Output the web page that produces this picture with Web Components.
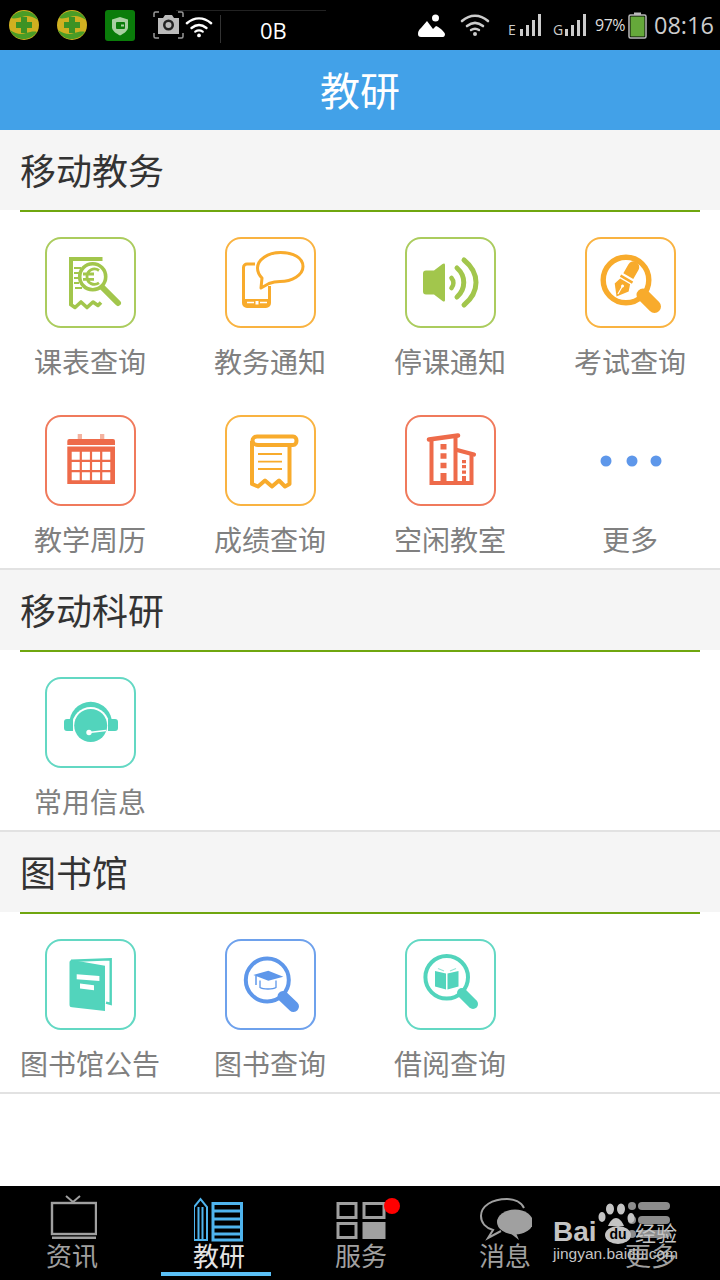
<!DOCTYPE html>
<html lang="zh">
<head>
<meta charset="utf-8">
<title>教研</title>
<style>
  html, body { margin: 0; padding: 0; background: #fff; }
  body { font-family: "Noto Sans CJK SC", "Noto Sans", sans-serif; }
</style>
</head>
<body>
<app-shell>
  <status-bar slot="status"></status-bar>
  <title-bar slot="title">教研</title-bar>
  <menu-section title="移动教务">
    <menu-tile label="课表查询" icon="receipt" color="#a2c64c"></menu-tile>
    <menu-tile label="教务通知" icon="phone" color="#f8ab2c"></menu-tile>
    <menu-tile label="停课通知" icon="speaker" color="#a2c64c"></menu-tile>
    <menu-tile label="考试查询" icon="pen" color="#f8ab2c"></menu-tile>
    <menu-tile label="教学周历" icon="calendar" color="#ee6b4a"></menu-tile>
    <menu-tile label="成绩查询" icon="scroll" color="#f8ab2c"></menu-tile>
    <menu-tile label="空闲教室" icon="building" color="#ee6b4a"></menu-tile>
    <menu-tile label="更多" icon="more" color="#5e97ea" plain></menu-tile>
  </menu-section>
  <menu-section title="移动科研">
    <menu-tile label="常用信息" icon="headset" color="#52d4bc"></menu-tile>
  </menu-section>
  <menu-section title="图书馆">
    <menu-tile label="图书馆公告" icon="book" color="#52d4bc"></menu-tile>
    <menu-tile label="图书查询" icon="cap" color="#5e97ea"></menu-tile>
    <menu-tile label="借阅查询" icon="booksearch" color="#52d4bc"></menu-tile>
  </menu-section>
  <tab-bar slot="tabs"></tab-bar>
</app-shell>

<script>
// icons are drawn on the 90x90 box of a tile, currentColor is the tile colour
const ICONS = {
  receipt: `
    <path d="M24.500 22H57.500M26 20V68" fill="none" stroke="currentColor" stroke-width="4"/>
    <path d="M25 67l5 3.500 6-5.500 6 5.500 6-5.500 5 3.500 3-3" fill="none" stroke="currentColor" stroke-width="3.600" stroke-linejoin="round"/>
    <path d="M29 31h7M29 36h5M29 41h5M29 46h5M30 51h7" fill="none" stroke="currentColor" stroke-width="2"/>
    <circle cx="47.700" cy="39.700" r="13" fill="#fff" stroke="currentColor" stroke-width="3.600"/>
    <path d="M54 33.500c-5-3.500-12-.5-12 6.200s7 9.700 12 6.200M38 37h11M38 42.400h11" fill="none" stroke="currentColor" stroke-width="2.800"/>
    <path d="M58 51l15 15" stroke="currentColor" stroke-width="6" stroke-linecap="round"/>`,
  phone: `
    <path d="M30 27H22a3.500 3.500 0 0 0-3.500 3.500V66a3.500 3.500 0 0 0 3.500 3.500H41a3.500 3.500 0 0 0 3.500-3.500V49" fill="none" stroke="currentColor" stroke-width="3"/>
    <path d="M19 62h25v8H19z" fill="currentColor"/>
    <path d="M22 65.500h7M35 65.500h7" stroke="#fff" stroke-width="1.400"/>
    <rect x="30.500" y="64" width="3" height="3.500" fill="#fff"/>
    <path d="M37 41c-3-3-4.500-6-4.500-10 0-8 10-15.500 23-15.500S78 21 78 29.500 67 44.500 55 44.500c-4 0-7 .5-11 2l-8 4.500z" fill="#fff" stroke="currentColor" stroke-width="3" stroke-linejoin="round"/>`,
  speaker: `
    <path d="M21 33.500H29l8.500-6.500c1.500-1 2.500-.5 2.500 1v35c0 1.500-1 2-2.500 1L29 57.500h-8a3 3 0 0 1-3-3v-18a3 3 0 0 1 3-3z" fill="currentColor"/>
    <g fill="none" stroke="currentColor" stroke-width="5" stroke-linecap="round">
      <path d="M46.500 41c2.500 3 2.500 7 0 10" stroke-width="4.600"/>
      <path d="M52 31c9 8 9 21 0 29"/>
      <path d="M59 23c16 13 16 32 0 45"/>
    </g>`,
  pen: `
    <circle cx="41" cy="43" r="22.800" fill="none" stroke="currentColor" stroke-width="5.400"/>
    <path d="M58 58l11.500 11.500" stroke="currentColor" stroke-width="13" stroke-linecap="round"/>
    <g transform="translate(41 43) rotate(30) scale(1.150)">
      <path d="M-5-4v-9a5 5 0 0 1 10 0v9z" fill="currentColor"/>
      <rect x="-6" y="-2" width="12" height="2.200" fill="currentColor"/>
      <path d="M-5 1.500h10l2 6-7 9-7-9z" fill="currentColor"/>
      <path d="M0 6v8" stroke="#fff" stroke-width="1"/>
      <circle cx="0" cy="6" r="1.300" fill="#fff"/>
    </g>`,
  calendar: `
    <path d="M32.700 19H37v9h-4.300zM55 19h4.300v9H55z" fill="#f4b3a0"/>
    <path d="M22.300 26a2 2 0 0 1 2-2H68a2 2 0 0 1 2 2v4H22.300z" fill="currentColor"/>
    <path fill-rule="evenodd" fill="currentColor" d="M22.300 31.500H70V69H22.300z
      M26.700 36.700v8h8v-8zM36.900 36.700v8h8v-8zM47.100 36.700v8h8v-8zM57.300 36.700v8h8v-8z
      M26.700 47v8h8v-8zM36.900 47v8h8v-8zM47.100 47v8h8v-8zM57.300 47v8h8v-8z
      M26.700 57.300v8h8v-8zM36.900 57.300v8h8v-8zM47.100 57.300v8h8v-8zM57.300 57.300v8h8v-8z"/>`,
  scroll: `
    <path d="M27 26v43l6 2.500 7-6 7 6 7-6 6 6 4.500-2.500V31" fill="none" stroke="currentColor" stroke-width="4" stroke-linejoin="round"/>
    <path d="M33 30c-3.500 0-5.500-2.200-5.500-4.500s2-4 4.500-4h36c2.500 0 3.500 2.200 3.500 4.200S70.500 30 68 30H33" fill="none" stroke="currentColor" stroke-width="4"/>
    <path d="M33 39h24M33 46.700h24M33 54h24" stroke="currentColor" stroke-width="1.800"/>`,
  building: `
    <path d="M24 24.500l29-4" stroke="currentColor" stroke-width="4.600" stroke-linecap="round"/>
    <path d="M52 35l17 4.500" stroke="currentColor" stroke-width="4.200" stroke-linecap="round"/>
    <path d="M26.500 25v43h40V40M50.500 22v46" fill="none" stroke="currentColor" stroke-width="4"/>
    <path d="M25 66h43v3.500H25z" fill="currentColor"/>
    <path d="M35.500 29h6v5.500h-6zM35.500 38.300h6v5.500h-6zM35.500 47.700h6v5.500h-6zM35.500 58h6v10h-6zM57 45h4v3.200h-4zM57 50h4v3.200h-4zM57 55.500h4v3.200h-4zM57 61h4v7h-4z" fill="currentColor"/>`,
  more: `
    <circle cx="21" cy="46" r="5.500" fill="currentColor"/>
    <circle cx="47" cy="46" r="5.500" fill="currentColor"/>
    <circle cx="71" cy="46" r="5.500" fill="currentColor"/>`,
  headset: `
    <path d="M24.200 47a21.500 22.300 0 0 1 43 0z" fill="currentColor"/>
    <circle cx="45.700" cy="48.700" r="18.700" fill="#fff"/>
    <path d="M28 42v12h-6a3 3 0 0 1-3-3v-6a3 3 0 0 1 3-3zM64 42v12h6a3 3 0 0 0 3-3v-6a3 3 0 0 0-3-3z" fill="currentColor"/>
    <path d="M24 42h4v12h-4zM63 42h4v12h-4z" fill="currentColor"/>
    <circle cx="45.700" cy="48.500" r="16.500" fill="currentColor"/>
    <path d="M44 55.500l17-2" stroke="#fff" stroke-width="1.500"/>
    <circle cx="44" cy="55.500" r="2.700" fill="#fff"/>`,
  book: `
    <path d="M26 21.700l39.700-1.400V65L61 63.700" fill="none" stroke="currentColor" stroke-width="2.400"/>
    <path d="M27 21l33 5.800V72l-33-3.700a2.500 2.500 0 0 1-2.500-2.500V23.500A2.500 2.500 0 0 1 27 21z" fill="currentColor"/>
    <path d="M31.700 35.300l22.700 1.700v5l-22.700-1.700zM35 44.500l14 1.700v5l-14-1.700z" fill="#fff"/>`,
  cap: `
    <circle cx="42.300" cy="41" r="21.500" fill="none" stroke="currentColor" stroke-width="4"/>
    <path d="M58 57.500l10.500 10" stroke="currentColor" stroke-width="11" stroke-linecap="round"/>
    <path d="M28.300 36l15-4.300 15 6-15 4z" fill="currentColor"/>
    <path d="M35 41.500v7c3 2 13 2 16 0v-7" fill="none" stroke="currentColor" stroke-width="1.300"/>
    <path d="M31 37v9" stroke="currentColor" stroke-width="1.500"/>`,
  booksearch: `
    <circle cx="41.700" cy="38.300" r="21.300" fill="none" stroke="currentColor" stroke-width="4"/>
    <path d="M57 54l11 11" stroke="currentColor" stroke-width="10" stroke-linecap="round"/>
    <path d="M30 32l11 2.500v16L30 47.500zM53.500 32l-11 2.500v16l11-3z" fill="currentColor"/>
    <path d="M33 29.500l6 2.500M51 29.500l-6 2.500" stroke="currentColor" stroke-width="1.200" opacity=".6"/>`
};

class AppShell extends HTMLElement {
  constructor() {
    super();
    this.attachShadow({ mode: 'open' });
    this.shadowRoot.innerHTML = `
      <style>
        :host {
          display: flex;
          flex-direction: column;
          width: 720px;
          height: 1280px;
          overflow: hidden;
          background: #fff;
        }
        .content { flex: 1; min-height: 0; }
      </style>
      <slot name="status"></slot>
      <slot name="title"></slot>
      <div class="content"><slot></slot></div>
      <slot name="tabs"></slot>
    `;
  }
}

class StatusBar extends HTMLElement {
  constructor() {
    super();
    this.attachShadow({ mode: 'open' });
    const wifi = (w, h) => `
      <svg width="${w}" height="${h}" viewBox="0 0 30 24" fill="none" stroke="currentColor" stroke-linecap="round">
        <path d="M2 8c8-7 18-7 26 0" stroke-width="2.600"/>
        <path d="M7 13c5-4 11-4 16 0" stroke-width="2.600"/>
        <path d="M11 17c3-2 5-2 8 0" stroke-width="2.400"/>
        <circle cx="15" cy="21" r="2" fill="currentColor" stroke="none"/>
      </svg>`;
    const bars = `
      <svg width="21" height="23" viewBox="0 0 21 23" fill="#ccc">
        <rect x="0" y="15" width="3" height="7"/><rect x="6" y="11" width="3" height="11"/>
        <rect x="12" y="6" width="3" height="16"/><rect x="18" y="0" width="3" height="22"/>
      </svg>`;
    const cross = `
      <svg width="32" height="32" viewBox="0 0 32 32">
        <circle cx="16" cy="16" r="15" fill="#d0b020"/>
        <path d="M3 9c5-7 14-9 21-5 3 2 5 4 6 7-6-4-11-5-16-3-4 1-8 2-11 1zM29 23c-5 7-14 9-21 5-3-2-5-4-6-7 6 4 11 5 16 3 4-1 8-2 11-1z" fill="#4a9c26"/>
        <path d="M13 8h6v5h5v6h-5v5h-6v-5H8v-6h5z" fill="#3d9224"/>
      </svg>`;
    this.shadowRoot.innerHTML = `
      <style>
        :host {
          display: flex;
          align-items: center;
          height: 50px;
          background: #000;
          color: #fff;
          font-family: "Open Sans", "Noto Sans", sans-serif;
          flex: none;
          position: relative;
        }
        svg { display: block; flex: none; }
        .speed { font-size: 22px; margin-left: 39px; margin-top: 9px; width: 27px; }
        .sep { width: 1px; height: 28px; background: #333; margin-left: 7px; margin-top: 8px; flex: none; }
        .net { font-size: 14px; color: #ccc; align-self: flex-end; margin-bottom: 14px; width: 12px; text-align: left; line-height: 12px; }
        .pct { font-size: 16px; color: #ddd; margin-left: 9px; letter-spacing: -0.5px; width: 33px; }
        .clock { font-size: 23.500px; color: #ccc; margin-left: 7px; }
        .top { position: absolute; left: 176px; top: 10px; width: 150px; height: 1px; background: #222; }
      </style>
      <span class="top"></span>
      <span style="margin-left:8px">${cross}</span>
      <span style="margin-left:16px">${cross}</span>
      <svg style="margin-left:17px" width="30" height="31" viewBox="0 0 30 31">
        <rect width="30" height="31" rx="3" fill="#0a7c0a"/>
        <path d="M15 7l8 2.500v8c0 3-4 6-8 8-4-2-8-5-8-8v-8z" fill="#a9cfa2"/>
        <rect x="11" y="12" width="9" height="7" rx="1" fill="#0a7c0a"/><rect x="16" y="14.500" width="3" height="2" fill="#a9cfa2"/>
      </svg>
      <svg style="margin-left:18px" width="31" height="28" viewBox="0 0 31 28">
        <path d="M1 6V2.500A1.500 1.500 0 0 1 2.500 1H6M25 1h3.500A1.500 1.500 0 0 1 30 2.500V6M1 22v3.500A1.500 1.500 0 0 0 2.500 27H6M25 27h3.500a1.500 1.500 0 0 0 1.500-1.500V22" fill="none" stroke="#999" stroke-width="1.500"/>
        <path d="M5 7h5l2-3h7l2 3h5v16H5z" fill="#bbb"/>
        <circle cx="15.500" cy="14" r="5.500" fill="#222"/><circle cx="15.500" cy="14" r="3" fill="#bbb"/>
      </svg>
      <span style="margin-left:1px;margin-top:3px">${wifi(28, 24)}</span>
      <span class="sep"></span>
      <span class="speed">0B</span>
      <svg style="margin-left:131px" width="27" height="23" viewBox="0 0 27 23" fill="#fff">
        <circle cx="17.500" cy="4" r="3.500"/>
        <path d="M0 20c0-3 1-4 3-6l6-7 6 8 3-3c3 1 8 5 9 8 0 2-1 3-2 3H3c-2 0-3-1-3-3z"/>
      </svg>
      <span style="margin-left:15px;color:#ccc">${wifi(30, 24)}</span>
      <span class="net" style="margin-left:18px">E</span>${bars}
      <span class="net" style="margin-left:12px">G</span>${bars}
      <span class="pct">97%</span>
      <svg style="margin-left:0" width="19" height="27" viewBox="0 0 19 27">
        <rect x="6" y="0.500" width="7" height="3" fill="#bbb"/>
        <rect x="1" y="3" width="17" height="23" rx="1.500" fill="#000" stroke="#bbb" stroke-width="1.500"/>
        <rect x="2.500" y="4.500" width="14" height="20" fill="#65a83a"/>
      </svg>
      <span class="clock">08:16</span>
    `;
  }
}

class TitleBar extends HTMLElement {
  constructor() {
    super();
    this.attachShadow({ mode: 'open' });
    this.shadowRoot.innerHTML = `
      <style>
        :host {
          display: flex;
          flex: none;
          align-items: center;
          justify-content: center;
          height: 77px;
          padding-bottom: 3px;
          background: #42a1e8;
          color: #fff;
          font-size: 40px;
        }
      </style>
      <slot></slot>
    `;
  }
}

class MenuSection extends HTMLElement {
  constructor() {
    super();
    this.attachShadow({ mode: 'open' });
    this.shadowRoot.innerHTML = `
      <style>
        :host {
          display: block;
          border-bottom: 2px solid #e2e2e2;
        }
        .head {
          height: 78px;
          padding: 0 0 2px 20px;
          background: #f5f5f5;
          display: flex;
          align-items: center;
          font-size: 36px;
          color: #333;
        }
        .rule { height: 2px; margin: 0 20px; background: #6fa60f; }
        .tiles {
          display: grid;
          grid-template-columns: repeat(4, 180px);
          grid-auto-rows: 178px;
        }
      </style>
      <div class="head"></div>
      <div class="rule"></div>
      <div class="tiles"><slot></slot></div>
    `;
  }

  connectedCallback() {
    this.shadowRoot.querySelector('.head').textContent = this.getAttribute('title');
  }
}

class MenuTile extends HTMLElement {
  constructor() {
    super();
    this.attachShadow({ mode: 'open' });
  }

  connectedCallback() {
    const frame = this.hasAttribute('plain') ? '' :
      '<rect x="1" y="1" width="89" height="89" rx="15" fill="none" stroke="currentColor" stroke-width="2" opacity=".9"/>';
    this.shadowRoot.innerHTML = `
      <style>
        :host {
          display: flex;
          flex-direction: column;
          align-items: center;
          padding-top: 25px;
          color: ${this.getAttribute('color')};
        }
        svg { display: block; flex: none; overflow: visible; }
        .label {
          margin-top: 14px;
          height: 40px;
          line-height: 40px;
          font-size: 28px;
          color: #808080;
          white-space: nowrap;
        }
      </style>
      <svg width="90" height="90" viewBox="0 0 90 90">${frame}${ICONS[this.getAttribute('icon')]}</svg>
      <div class="label">${this.getAttribute('label')}</div>
    `;
  }
}

class TabBar extends HTMLElement {
  constructor() {
    super();
    this.attachShadow({ mode: 'open' });
    this.shadowRoot.innerHTML = `
      <style>
        :host {
          display: grid;
          flex: none;
          grid-template-columns: 144px 150px 134px 154px 138px;
          height: 94px;
          background: #000;
          position: relative;
          color: #a0a0a0;
        }
        .item {
          display: flex;
          flex-direction: column;
          align-items: center;
          position: relative;
          font-size: 26px;
        }
        .icon { height: 56px; display: block; flex: none; }
        .item span { line-height: 28px; margin-top: -1px; }
        .active { color: #e4e4e4; }
        .active::after {
          content: "";
          position: absolute;
          left: 17px;
          bottom: 4px;
          width: 110px;
          height: 4px;
          background: #5ac0f6;
        }
        .dot {
          position: absolute;
          left: 90px;
          top: 12px;
          width: 16px;
          height: 16px;
          border-radius: 50%;
          background: #f00;
        }
        .mark {
          position: absolute;
          left: 553px;
          top: 14px;
          width: 130px;
          height: 78px;
          color: #c4c4c4;
          font-family: "Liberation Sans", sans-serif;
        }
        .bai { position: absolute; left: 0; top: 14px; font-size: 28px; font-weight: bold; line-height: 36px; }
        .du {
          position: absolute; left: 52px; top: 26px; width: 26px; height: 18px; border-radius: 50%;
          background: #c4c4c4; color: #000; font-size: 14px; font-weight: bold; line-height: 17px; text-align: center;
        }
        .jy { position: absolute; left: 82px; top: 18px; font: 21px/28px "Noto Sans CJK SC", sans-serif; }
        .url { position: absolute; left: 0; top: 43px; font-size: 15.500px; line-height: 22px; white-space: nowrap; }
        .paw { position: absolute; left: 43px; top: 3px; }
      </style>
      <div class="item">
        <svg class="icon" width="50" height="56" viewBox="0 0 50 56">
          <path d="M19 10l7 6 7-6" fill="none" stroke="#a0a0a0" stroke-width="2"/>
          <rect x="5" y="17" width="44" height="31" fill="none" stroke="#a0a0a0" stroke-width="2.400"/>
          <path d="M5 50.500h44v2.500H5z" fill="#a0a0a0"/>
        </svg>
        <span>资讯</span>
      </div>
      <div class="item active">
        <svg class="icon" width="50" height="56" viewBox="0 0 50 56" fill="none" stroke="#4fb4ee">
          <path d="M0 54V21l6.500-8 6.500 8v33zM4.500 21v33M8.500 21v33" stroke-width="2"/>
          <path d="M19 17.500h28.500V54H19z" stroke-width="3"/>
          <path d="M19 25h28M19 33h28M19 41h28M19 48h28" stroke-width="3"/>
        </svg>
        <span>教研</span>
      </div>
      <div class="item">
        <svg class="icon" width="50" height="56" viewBox="0 0 50 56">
          <g fill="none" stroke="#a0a0a0" stroke-width="3">
            <path d="M2 17.500h18v14H2zM28 17.500h20v14H28zM2 37.500h18v14H2z"/>
          </g>
          <rect x="26.500" y="36" width="23" height="17" fill="#a0a0a0"/>
        </svg>
        <span>服务</span>
        <i class="dot"></i>
      </div>
      <div class="item">
        <svg class="icon" width="54" height="56" viewBox="0 0 54 56">
          <path d="M46 22c-3-6-10-9-17-9C14 13 3 20 3 30c0 7 5 12 12 14l-5 8 13-7" fill="none" stroke="#a0a0a0" stroke-width="2"/>
          <ellipse cx="37" cy="36" rx="18" ry="12.500" fill="#a0a0a0"/>
          <path d="M38 47l3 7-9-7z" fill="#a0a0a0"/>
        </svg>
        <span>消息</span>
      </div>
      <div class="item">
        <svg class="icon" width="50" height="56" viewBox="0 0 50 56" fill="#8c8c8c">
          <circle cx="6" cy="20" r="4"/><rect x="12" y="16" width="32" height="8" rx="4"/>
          <circle cx="6" cy="34" r="4"/><rect x="12" y="30" width="32" height="8" rx="4"/>
          <circle cx="6" cy="48" r="4"/><rect x="12" y="44" width="32" height="8" rx="4"/>
        </svg>
        <span>更多</span>
      </div>
      <div class="mark">
        <svg class="paw" width="42" height="30" viewBox="0 0 42 30" fill="#c4c4c4">
          <ellipse cx="6" cy="14" rx="3.500" ry="5"/><ellipse cx="14" cy="6" rx="4" ry="5.500"/>
          <ellipse cx="25" cy="6" rx="4" ry="5.500"/><ellipse cx="35" cy="15" rx="3.500" ry="5"/>
          <path d="M12 23c2-5 5-8 8-8s6 3 8 8z"/>
        </svg>
        <span class="bai">Bai</span>
        <span class="du">du</span>
        <span class="jy">经验</span>
        <span class="url">jingyan.baidu.com</span>
      </div>
    `;
  }
}

customElements.define('app-shell', AppShell);
customElements.define('status-bar', StatusBar);
customElements.define('title-bar', TitleBar);
customElements.define('menu-section', MenuSection);
customElements.define('menu-tile', MenuTile);
customElements.define('tab-bar', TabBar);
</script>
</body>
</html>
